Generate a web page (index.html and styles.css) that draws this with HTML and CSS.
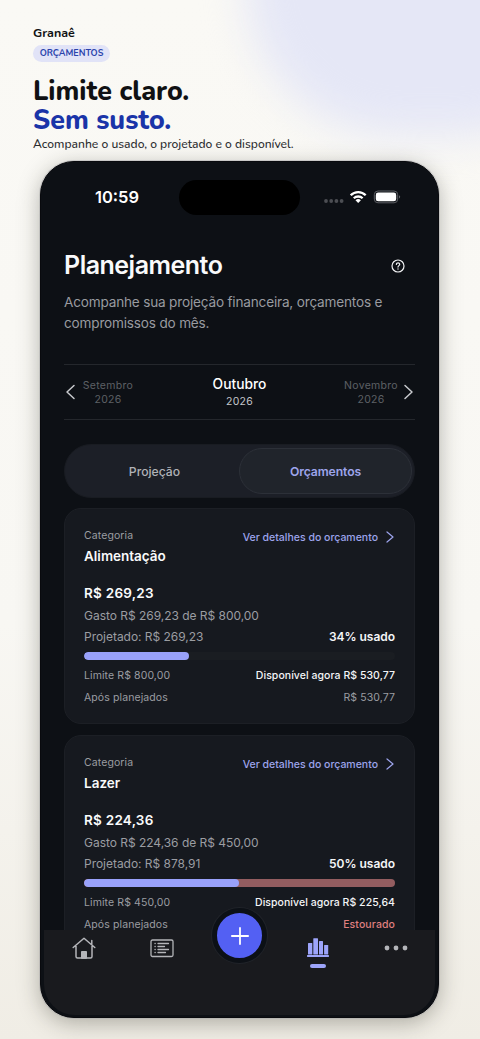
FILE: index.html
```html
<!DOCTYPE html>
<html lang="pt-BR">
<head>
<meta charset="utf-8">
<title>Granaê</title>
<link rel="stylesheet" href="styles.css">
</head>
<body>
<div class="backdrop"></div>
<header class="promo">
  <div class="brand">Granaê</div>
  <div class="tag">ORÇAMENTOS</div>
  <h1 class="headline">Limite claro.<br><span class="accent">Sem susto.</span></h1>
  <p class="tagline">Acompanhe o usado, o projetado e o disponível.</p>
</header>
<main class="phone">
  <div class="statusbar">
    <span class="time">10:59</span>
    <span class="island"></span>
    <svg class="signals" width="80" height="16" viewBox="0 0 80 16">
      <g fill="#4c4e53"><circle cx="3" cy="12" r="1.900"/><circle cx="8.200" cy="12" r="1.900"/><circle cx="13.400" cy="12" r="1.900"/><circle cx="18.600" cy="12" r="1.900"/></g>
      <g fill="none" stroke="#fff" stroke-width="2.300"><path d="M27.700 6.300a10.400 10.400 0 0 1 15 0"/><path d="M30.800 9.300a6.300 6.300 0 0 1 8.800 0"/></g>
      <path d="M32.500 11.300a3.800 3.800 0 0 1 5.400 0l-2.700 2.700z" fill="#fff"/>
      <rect x="51.300" y="2" width="23.400" height="11.800" rx="3.700" fill="none" stroke="#5d5f64"/>
      <rect x="52.800" y="3.500" width="20.400" height="8.800" rx="2.400" fill="#fff"/>
      <path d="M76 6.300c1.600.5 1.600 2.700 0 3.200z" fill="#5d5f64"/>
    </svg>
  </div>
  <section class="intro">
    <div class="title-row">
      <h2>Planejamento</h2>
      <svg width="14" height="14" viewBox="0 0 14 14" fill="none" stroke="#f1f2f4" stroke-width="1.200" stroke-linecap="round"><circle cx="7" cy="7" r="6"/><path d="M5.400 5.500C5.400 3.300 8.700 3.400 8.700 5.400C8.700 6.600 7 6.700 7 8.100"/><path d="M7 10v.1" stroke-width="1.400"/></svg>
    </div>
    <p class="lead">Acompanhe sua projeção financeira, orçamentos e<br>compromissos do mês.</p>
  </section>
  <nav class="months">
    <svg width="12" height="16" viewBox="0 0 12 16"><path d="M10 1.500L3 8l7 6.500"/></svg>
    <div class="month side">Setembro<br>2026</div>
    <div class="month current"><b>Outubro</b><span>2026</span></div>
    <div class="month side">Novembro<br>2026</div>
    <svg width="12" height="16" viewBox="0 0 12 16"><path d="M2 1.500L9 8l-7 6.500"/></svg>
  </nav>
  <div class="segments">
    <div class="segment">Projeção</div>
    <div class="segment active">Orçamentos</div>
  </div>
  <div class="cards">
    <article class="card">
      <div class="card-head">
        <div><div class="label">Categoria</div><h3>Alimentação</h3></div>
        <div class="link">Ver detalhes do orçamento<svg width="8" height="12" viewBox="0 0 8 12"><path d="M1 1l6 5-6 5"/></svg></div>
      </div>
      <div class="amount">R$ 269,23</div>
      <div class="spent">Gasto R$ 269,23 de R$ 800,00</div>
      <div class="row projected"><span>Projetado: R$ 269,23</span><b>34% usado</b></div>
      <div class="bar"><i class="fill" style="width:33.65%"></i></div>
      <div class="row small limit"><span>Limite R$ 800,00</span><b>Disponível agora R$ 530,77</b></div>
      <div class="row small after"><span>Após planejados</span><span class="rest">R$ 530,77</span></div>
    </article>
    <article class="card">
      <div class="card-head">
        <div><div class="label">Categoria</div><h3>Lazer</h3></div>
        <div class="link">Ver detalhes do orçamento<svg width="8" height="12" viewBox="0 0 8 12"><path d="M1 1l6 5-6 5"/></svg></div>
      </div>
      <div class="amount">R$ 224,36</div>
      <div class="spent">Gasto R$ 224,36 de R$ 450,00</div>
      <div class="row projected"><span>Projetado: R$ 878,91</span><b>50% usado</b></div>
      <div class="bar over"><i class="fill" style="width:49.86%"></i></div>
      <div class="row small limit"><span>Limite R$ 450,00</span><b>Disponível agora R$ 225,64</b></div>
      <div class="row small after"><span>Após planejados</span><span class="bad">Estourado</span></div>
    </article>
  </div>
  <footer class="tabbar">
    <div class="tab"><svg width="24" height="24" viewBox="0 0 24 24" fill="none" stroke="#b4b5b9" stroke-width="1.500" stroke-linecap="round" stroke-linejoin="round"><path d="M1.200 11.500L12 2.200l10.800 9.300M4 10v10.500q0 1.500 1.500 1.500h13q1.500 0 1.500-1.500V10M19.800 4.500V8"/><path d="M9.500 22v-6.500h5V22z" fill="#b4b5b9" stroke-width="1"/></svg></div>
    <div class="tab"><svg width="24" height="24" viewBox="0 0 24 24" fill="none" stroke="#b4b5b9" stroke-width="1.300" stroke-linecap="round"><rect x="1" y="4" width="22" height="16.500" rx="1.500"/><path d="M5 7.500h.2M5 10.500h.2M5 13.500h.2M5 16.500h.2M8 7.500h10.500M8 10.500h6.500M8 13.500h10.500M8 16.500h7.500"/></svg></div>
    <div class="tab"><div class="fab"><svg width="20" height="20" viewBox="0 0 20 20" stroke="#fff" stroke-width="1.800" stroke-linecap="round"><path d="M10 1.900v16.200M1.900 10h16.200"/></svg></div></div>
    <div class="tab selected"><svg width="24" height="24" viewBox="0 0 24 24" fill="#9da4fa"><rect x="2" y="7" width="4.300" height="11.500" rx=".6"/><rect x="7.300" y="2.200" width="4.700" height="16.300" rx=".6"/><rect x="13" y="5" width="4" height="13.500" rx=".6"/><rect x="18.100" y="9" width="4.100" height="9.500" rx=".6"/><rect x="1" y="19.100" width="22" height="1.800" rx=".6"/></svg><i class="marker"></i></div>
    <div class="tab"><svg width="24" height="24" viewBox="0 0 24 24" fill="#b4b5b9"><circle cx="3" cy="12" r="2.400"/><circle cx="12" cy="12" r="2.400"/><circle cx="21" cy="12" r="2.400"/></svg></div>
  </footer>
</main>
</body>
</html>
```
FILE: styles.css
```css
* { box-sizing: border-box; }
body {
  margin: 0;
  width: 480px;
  height: 1039px;
  position: relative;
  overflow: hidden;
  font-family: Inter, "Liberation Sans", sans-serif;
  background: linear-gradient(#faf9f5, #f8f7f3 60%, #f0ede5);
}
/* soft lilac glow behind the header */
.backdrop {
  position: absolute;
  inset: 0;
  overflow: hidden;
}
.backdrop::before {
  content: "";
  position: absolute;
  left: 246px;
  top: -150px;
  width: 340px;
  height: 286px;
  border-radius: 60px 0 120px 150px;
  background: #e5e7f6;
  filter: blur(20px);
}
h1, h2, h3, p { margin: 0; }
b { font-weight: 600; }

.promo {
  position: relative;
  height: 161px;
  padding: 25px 33px 0;
  font-family: Nunito, "Noto Sans", sans-serif;
  color: #101113;
}
.brand { font-size: 12.500px; line-height: 16px; font-weight: 700; }
.tag {
  width: 77px;
  height: 17px;
  margin-top: 4px;
  border-radius: 9px;
  background: #e1e3f7;
  color: #2b43ad;
  font-size: 9px;
  line-height: 17px;
  font-weight: 700;
  text-align: center;
}
.headline { margin-top: 15px; font-size: 26.800px; line-height: 29px; font-weight: 800; }
.headline .accent { color: #1a34a8; }
.tagline { margin-top: 1px; font-size: 12.100px; line-height: 17px; font-weight: 500; color: #2c2d30; white-space: nowrap; }

.phone {
  width: 399px;
  height: 857px;
  margin-left: 40px;
  padding: 0 23px;
  position: relative;
  overflow: hidden;
  border-radius: 34px;
  border: 1px solid #090a0e;
  background: #0d1015;
  box-shadow: 0 0 0 1px rgba(170,171,172,.45), 0 5px 22px rgba(40,40,30,.34);
}
.statusbar {
  height: 70px;
  display: grid;
  grid-template-columns: 115px 121px 1fr;
  align-items: center;
}
.time { padding-left: 31px; font-size: 16.500px; font-weight: 600; color: #fff; }
.island { height: 35px; border-radius: 18px; background: #000; }
.signals { margin-left: 23px; }

.title-row { display: flex; align-items: center; justify-content: space-between; height: 40px; margin-top: 14px; padding-right: 10px; }
.title-row h2 { margin-top: -2px; font-size: 25px; font-weight: 600; letter-spacing: -.5px; color: #f9fafb; }
.lead { margin-top: 6px; font-size: 13.600px; line-height: 21px; letter-spacing: -.19px; color: #999ba0; white-space: nowrap; }

.months {
  height: 56px;
  margin-top: 30px;
  border: solid #24272c;
  border-width: 1px 0;
  display: grid;
  grid-template-columns: 12px 64px 1fr 64px 12px;
  align-items: center;
}
.months svg, .link svg { fill: none; stroke: #c8cace; stroke-width: 1.500; stroke-linecap: round; stroke-linejoin: round; }
.month { padding-top: 2px; text-align: center; letter-spacing: .3px; }
.side { font-size: 10.500px; line-height: 14px; color: #5d6065; }
.current b { display: block; font-size: 13.800px; line-height: 18px; font-weight: 500; color: #fff; letter-spacing: 0; }
.current span { display: block; font-size: 10.500px; line-height: 18px; color: #c5c7cb; }

.segments {
  height: 54px;
  margin-top: 24px;
  padding: 3px;
  border-radius: 27px;
  border: 1px solid #191c22;
  background: #1c1f27;
  display: grid;
  grid-template-columns: 171px 173px;
}
.segment { display: flex; align-items: center; justify-content: center; padding-left: 2px; font-size: 12.200px; font-weight: 500; color: #b0b2b7; }
.active { border: 1px solid #2c3038; border-radius: 24px; background: #20242b; color: #9da4ec; padding: 0; font-weight: 600; letter-spacing: -.1px; }

.cards { display: grid; gap: 11px; margin-top: 10px; }
.card {
  height: 216px;
  padding: 19px 19px;
  border: 1px solid #1c1f25;
  border-radius: 17px;
  background: #16191f;
  color: #9b9da2;
}
.card-head { display: flex; justify-content: space-between; height: 54px; }
.label { font-size: 10.500px; line-height: 16px; letter-spacing: .1px; }
h3 { margin-top: 2px; font-size: 13.500px; line-height: 20px; font-weight: 600; color: #f9fafb; }
.link { display: flex; align-items: center; gap: 8px; height: 18px; font-size: 10.500px; font-weight: 500; letter-spacing: 0; color: #9da4ec; margin-right: 1px; }
.link svg { stroke: #9da4ec; stroke-width: 1.200; }
.amount { height: 22px; line-height: 22px; font-size: 13.500px; font-weight: 600; letter-spacing: .25px; color: #fafbfc; }
.spent, .row { font-size: 12px; line-height: 22px; letter-spacing: -.03px; }
.spent { line-height: 23px; height: 22px; }
.row { display: flex; justify-content: space-between; }
.projected { height: 26px; line-height: 21px; }
.row b { color: #f4f5f7; }
.bar { height: 8px; border-radius: 4px; background: #1a1d22; overflow: hidden; }
.bar .fill { display: block; height: 8px; border-radius: 4px; background: #99a1fa; }
.bar.over { background: #935d60; }
.small { font-size: 10.500px; letter-spacing: .1px; }
.small b { font-weight: 500; letter-spacing: .05px; }
.limit { margin-top: 5px; }
.bad { color: #df7f7f; font-weight: 500; }

.tabbar {
  position: absolute;
  left: 3px;
  right: 3px;
  bottom: 2px;
  height: 85px;
  display: grid;
  grid-template-columns: repeat(5, 78.200px);
  border-radius: 0 0 31px 31px;
  background: #191a1e;
}
.tab { display: flex; flex-direction: column; align-items: center; padding: 6px 0 0 1px; }
.marker { width: 16px; height: 4px; margin-top: 4px; border-radius: 2px; background: #9da4fa; }
.fab {
  width: 55px;
  height: 55px;
  flex: none;
  margin-top: -28px;
  border: 5px solid #0c1016;
  border-radius: 50%;
  background: #5360f3;
  box-shadow: 0 0 0 1px #202329;
  display: flex;
  align-items: center;
  justify-content: center;
}
```
